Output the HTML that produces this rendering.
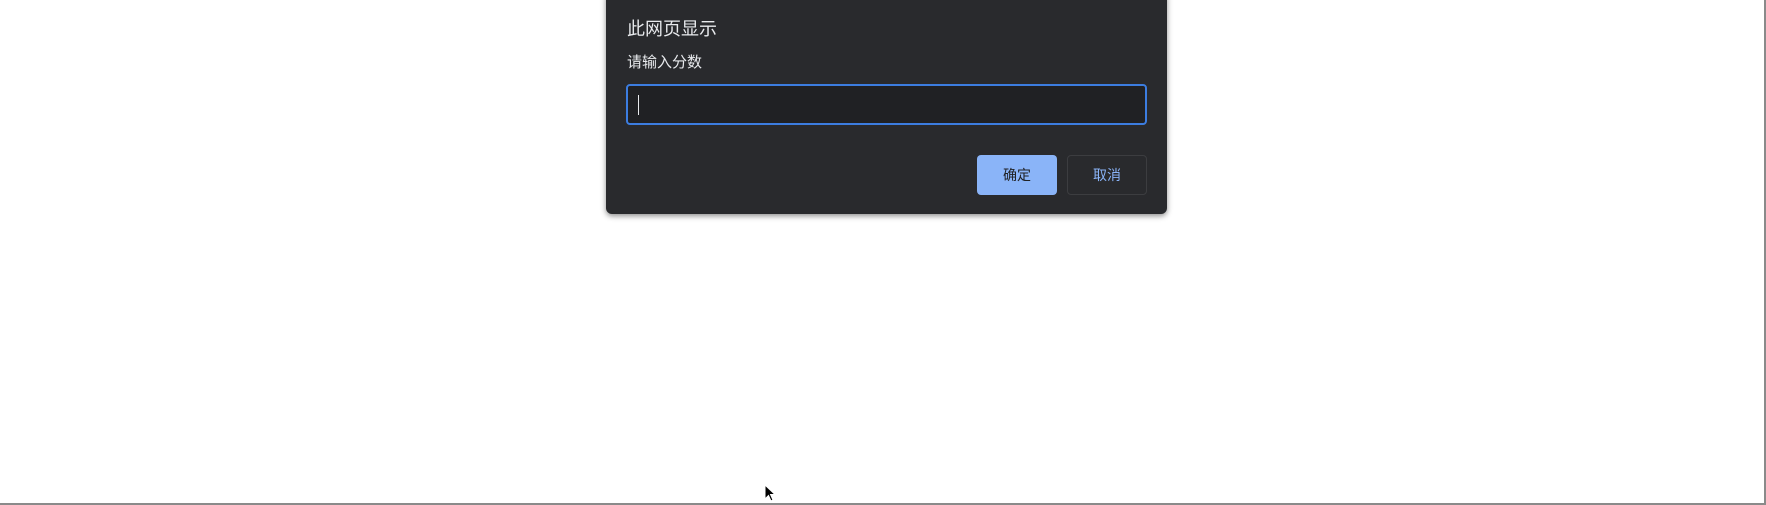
<!DOCTYPE html>
<html><head><meta charset="utf-8"><style>
html,body{margin:0;padding:0;width:1766px;height:505px;background:#fff;overflow:hidden;position:relative;font-family:"Liberation Sans","Noto Sans CJK SC",sans-serif}
.frame{position:absolute;left:0;top:0;width:1764px;height:503px;border-right:2px solid #8a8a8a;border-bottom:2px solid #8a8a8a}
.dlg{position:absolute;left:606px;top:-6px;width:561px;height:220px;background:#292a2d;border-radius:0 0 6px 6px;box-shadow:0 2px 6px rgba(0,0,0,.45)}
.t{position:absolute;left:21px;top:23px;color:#e8eaed;font-size:18px;line-height:24px}
.l{position:absolute;left:21px;top:59px;color:#e8eaed;font-size:15px;line-height:20px}
.in{position:absolute;left:20px;top:90px;width:517px;height:37px;background:#202124;border:2px solid #3c7de0;border-radius:4px}
.cur{position:absolute;left:10px;top:9px;width:1px;height:20px;background:#e8eaed}
.ok{position:absolute;left:371px;top:161px;width:80px;height:40px;background:#8ab4f8;border-radius:4px;color:#202124;font-size:14px;line-height:40px;text-align:center}
.ca{position:absolute;left:461px;top:161px;width:78px;height:38px;border:1px solid #3c3d40;border-radius:4px;color:#8ab4f8;font-size:14px;line-height:38px;text-align:center}
</style></head><body>
<div class="frame"></div>
<div class="dlg">
<div class="t">此网页显示</div>
<div class="l">请输入分数</div>
<div class="in"><div class="cur"></div></div>
<div class="ok">确定</div>
<div class="ca">取消</div>
</div>
<svg style="position:absolute;left:764px;top:484px" width="12" height="18" viewBox="0 0 12 18"><path d="M1 1 L1 15 L4.5 11.5 L7 17 L9 16 L6.5 10.5 L11 10.5 Z" fill="#000" stroke="#fff" stroke-width="1"/></svg>
</body></html>
